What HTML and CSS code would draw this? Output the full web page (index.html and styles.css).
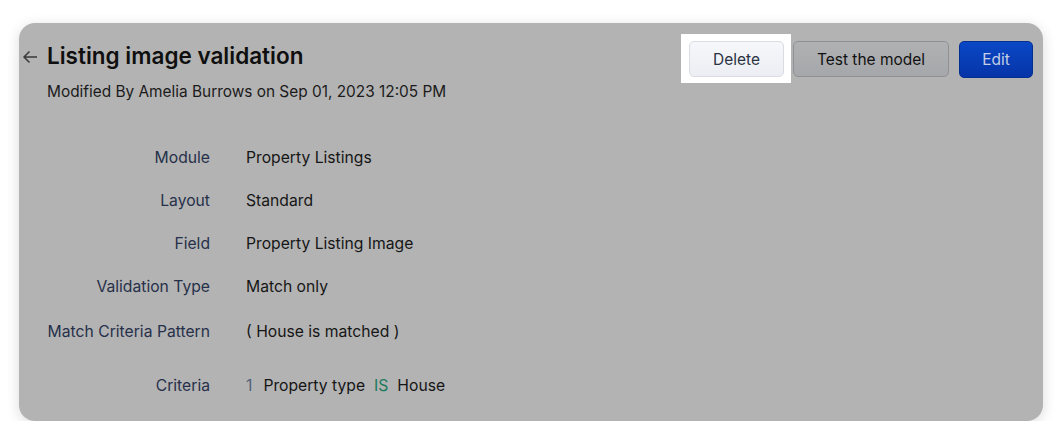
FILE: index.html
```html
<!DOCTYPE html>
<html>
<head>
<meta charset="utf-8">
<link rel="stylesheet" href="styles.css">
</head>
<body>
<div class="card">
  <div class="header">
    <div class="titles">
      <div class="title-row">
        <svg class="back" width="16" height="14" viewBox="0 0 16 14"><path d="M15 7H2M7.5 1.5L2 7l5.5 5.5" fill="none" stroke="#3a3a3a" stroke-width="1.5"/></svg>
        <h1 class="title">Listing image validation</h1>
      </div>
      <div class="subtitle">Modified By Amelia Burrows on Sep 01, 2023 12:05 PM</div>
    </div>
    <div class="actions">
      <div class="spotlight"><button class="btn btn-delete">Delete</button></div>
      <button class="btn btn-test">Test the model</button>
      <button class="btn btn-edit">Edit</button>
    </div>
  </div>
  <div class="details">
    <div class="row"><div class="label">Module</div><div class="value">Property Listings</div></div>
    <div class="row"><div class="label">Layout</div><div class="value">Standard</div></div>
    <div class="row"><div class="label">Field</div><div class="value">Property Listing Image</div></div>
    <div class="row"><div class="label">Validation Type</div><div class="value">Match only</div></div>
    <div class="row row-pattern"><div class="label">Match Criteria Pattern</div><div class="value">( House is matched )</div></div>
    <div class="row row-criteria"><div class="label">Criteria</div><div class="value"><span class="num">1</span><span>Property type</span><span class="op">IS</span><span>House</span></div></div>
  </div>
</div>
</body>
</html>
```
FILE: styles.css
```css
* { box-sizing: border-box; }
body {
  margin: 0;
  background: #ffffff;
  font-family: Inter, "Noto Sans", sans-serif;
}
.card {
  margin: 23px 19px 0 19px;
  width: 1024px;
  height: 398px;
  background: #b3b3b3;
  border-radius: 16px;
  box-shadow: 0 3px 14px rgba(0,0,0,0.14);
  padding: 11px 10px 0 3px;
}
.header {
  display: flex;
  justify-content: space-between;
  align-items: flex-start;
}
.titles { padding-top: 7px; }
.title-row {
  display: flex;
  align-items: center;
  height: 30px;
}
.back { margin-right: 9px; margin-top: 1px; }
.title {
  margin: 0;
  font-size: 22.5px;
  font-weight: 600;
  color: #0f0f0f;
  line-height: 30px;
}
.subtitle {
  margin-top: 11px;
  padding-left: 25px;
  font-size: 15.4px;
  line-height: 20px;
  color: #1b1b1b;
}
.actions {
  display: flex;
  align-items: flex-start;
}
.spotlight {
  background: #ffffff;
  padding: 7px 7px 6px 8px;
}
.btn {
  font-family: Inter, "Noto Sans", sans-serif;
  font-size: 15.5px;
  height: 36px;
  border-radius: 5px;
  padding: 0;
  cursor: pointer;
}
.btn-delete {
  width: 95px;
  background: linear-gradient(#f6f7fa, #eceef3);
  border: 1px solid #d9dce3;
  color: #2a3142;
}
.btn-test {
  margin-top: 7px;
  margin-left: 2px;
  width: 156px;
  background: linear-gradient(#b0b1b3, #a6a7aa);
  border: 1px solid #8e9094;
  color: #111111;
}
.btn-edit {
  margin-top: 7px;
  margin-left: 10px;
  width: 74px;
  height: 37px;
  background: linear-gradient(#0a48c6, #0634a8);
  border: 1px solid #06308f;
  color: #c4cfe6;
}
.details {
  margin-top: 46px;
  display: flex;
  flex-direction: column;
  gap: 23px;
}
.row {
  display: flex;
  font-size: 15.7px;
  line-height: 20px;
}
.row-pattern { margin-top: 2px; }
.row-criteria { margin-top: 11px; }
.label {
  width: 188px;
  text-align: right;
  color: #26304a;
}
.value {
  margin-left: 36px;
  color: #161616;
  display: flex;
  gap: 9px;
}
.num { color: #4f6179; margin-right: 2px; }
.op { color: #1d7a5c; }
```
